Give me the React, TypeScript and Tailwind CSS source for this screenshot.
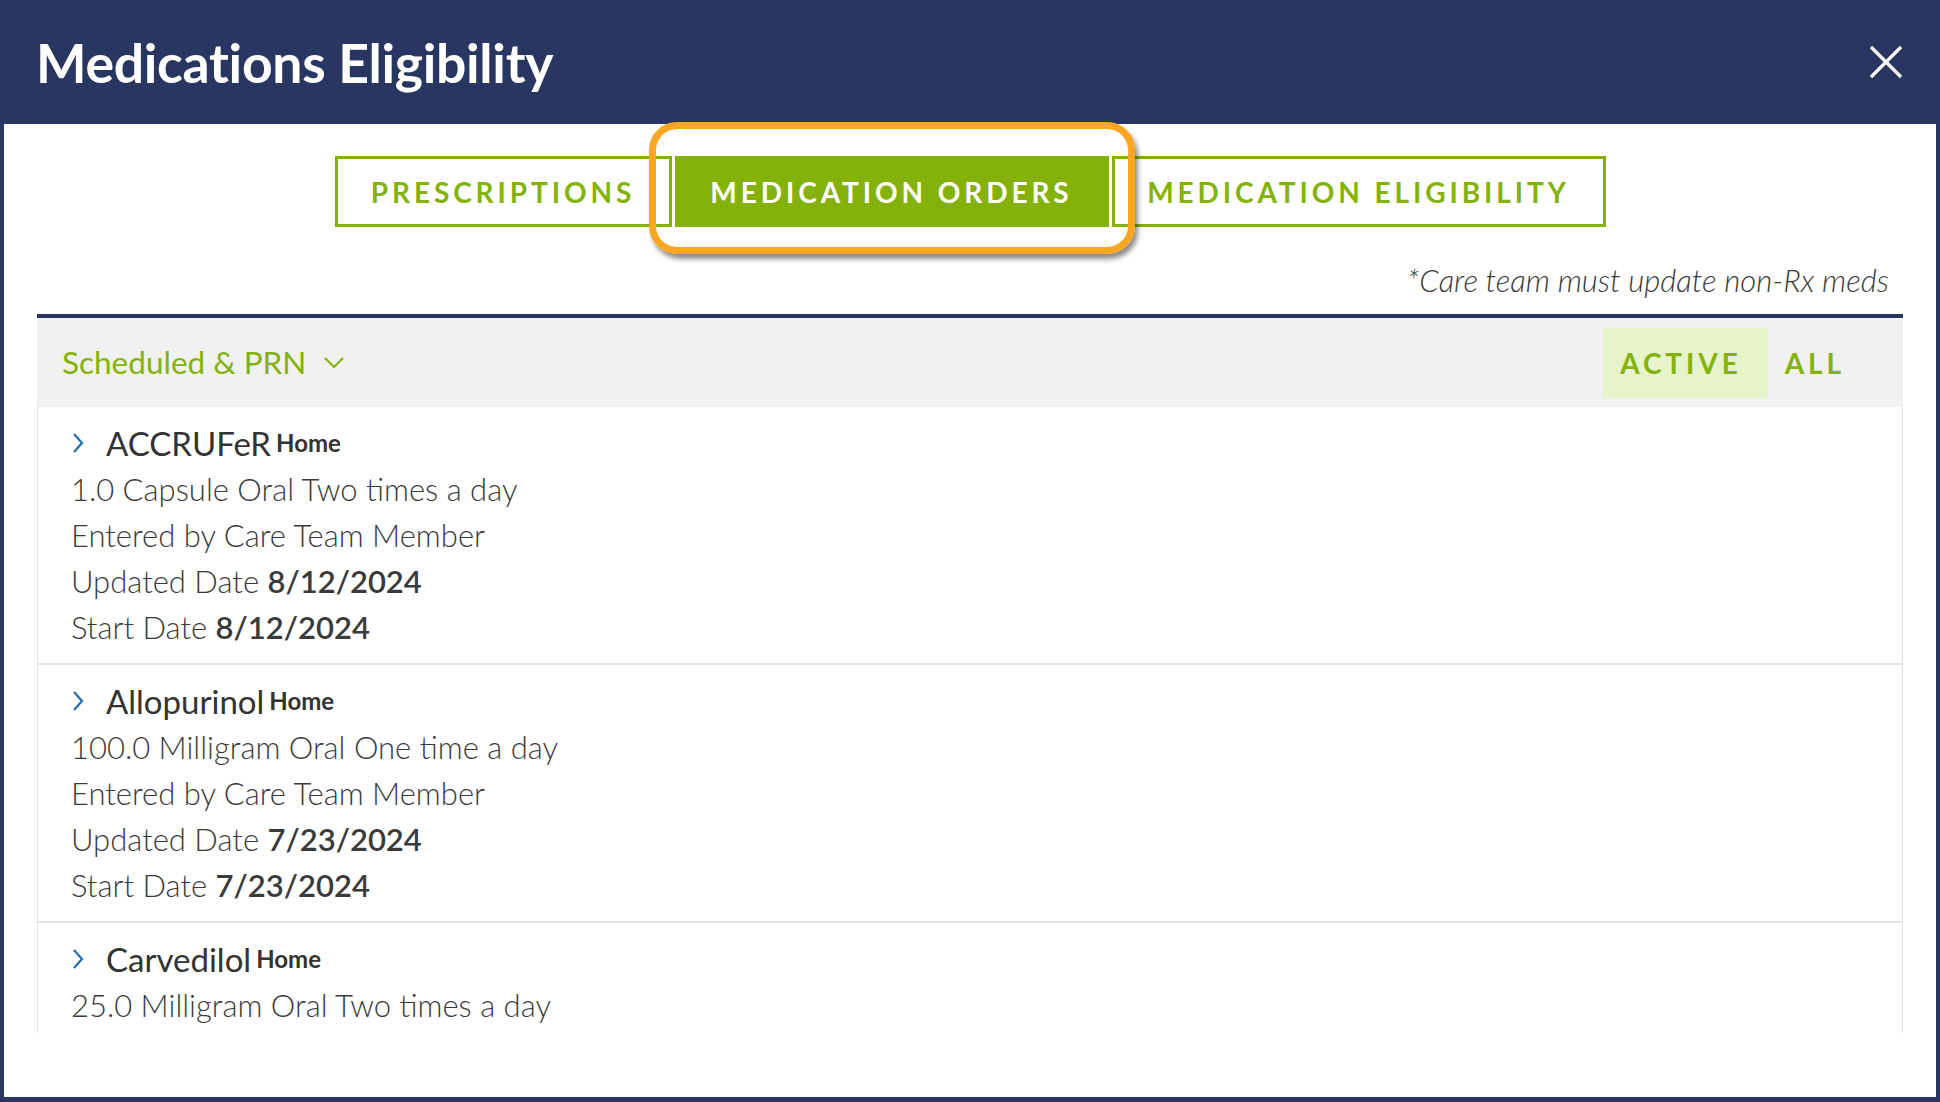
import React from "react";

const meds = [
  {
    name: "ACCRUFeR",
    dose: "1.0 Capsule Oral Two times a day",
    updated: "8/12/2024",
    start: "8/12/2024",
  },
  {
    name: "Allopurinol",
    dose: "100.0 Milligram Oral One time a day",
    updated: "7/23/2024",
    start: "7/23/2024",
  },
  {
    name: "Carvedilol",
    dose: "25.0 Milligram Oral Two times a day",
    updated: "7/23/2024",
    start: "7/23/2024",
  },
];

function ChevronRight() {
  return (
    <svg width="14" height="22" viewBox="0 0 14 22" fill="none">
      <path d="M3 2 L11 11 L3 20" stroke="#1f6db3" strokeWidth="2.2" />
    </svg>
  );
}

function MedRow({ med }: { med: (typeof meds)[number] }) {
  return (
    <div className="border-b-2 border-[#e3e3e3] pl-[33px] py-[13px] text-[31px] leading-[46px] font-light text-[#3a3a3a]">
      <div className="flex items-center">
        <span className="w-[35px] flex items-center">
          <ChevronRight />
        </span>
        <span className="font-normal text-[33px] text-[#333]">{med.name}</span>
        <span className="ml-[5px] font-bold text-[24px] text-[#333]">Home</span>
      </div>
      <div>{med.dose}</div>
      <div>Entered by Care Team Member</div>
      <div>
        Updated Date <span className="font-semibold">{med.updated}</span>
      </div>
      <div>
        Start Date <span className="font-semibold">{med.start}</span>
      </div>
    </div>
  );
}

export default function App() {
  return (
    <div className="w-[1940px] h-[1102px] bg-[#283661] flex flex-col font-['Lato',sans-serif]">
      <header className="h-[124px] flex items-center justify-between pl-[36px] pr-[37px] shrink-0">
        <h1 className="text-white font-bold text-[53.5px] tracking-[-0.3px]">Medications Eligibility</h1>
        <svg width="34" height="34" viewBox="0 0 34 34">
          <path d="M2 2 L32 32 M32 2 L2 32" stroke="white" strokeWidth="3.2" />
        </svg>
      </header>

      <div className="flex-1 bg-white mx-[4px] mb-[5px] px-[33px] flex flex-col">
        <div className="flex justify-center pt-[32px]">
          <div className="relative flex gap-[3px]">
            <button className="h-[71px] w-[337px] border-[3px] border-[#84b20b] text-[#84b20b] font-bold text-[28px] tracking-[0.14em]">
              PRESCRIPTIONS
            </button>
            <button className="h-[71px] w-[434px] bg-[#84b20b] text-white font-bold text-[28px] tracking-[0.14em]">
              MEDICATION ORDERS
            </button>
            <button className="h-[71px] w-[494px] border-[3px] border-[#84b20b] text-[#84b20b] font-bold text-[28px] tracking-[0.14em]">
              MEDICATION ELIGIBILITY
            </button>
            <div className="absolute left-[314px] top-[-34px] w-[486px] h-[132px] border-[7px] border-[#f9a723] rounded-[28px] shadow-[3px_5px_5px_rgba(0,0,0,0.45)] pointer-events-none" />
          </div>
        </div>

        <p className="mt-[33px] h-[40px] leading-[40px] text-right pr-[14px] italic font-light text-[31px] text-[#3a3a3a]">
          *Care team must update non-Rx meds
        </p>

        <div className="mt-[14px] border-t-4 border-[#283661] h-[719px] overflow-hidden flex flex-col">
          <div className="h-[89px] bg-[#f1f1f1] flex items-center justify-between pl-[25px] pr-[41px] shrink-0">
            <div className="flex items-center gap-[17px] text-[#84b20b] text-[31.5px]">
              <span>Scheduled &amp; PRN</span>
              <svg width="22" height="13" viewBox="0 0 22 13" fill="none">
                <path d="M2 2 L11 11 L20 2" stroke="#84b20b" strokeWidth="2" />
              </svg>
            </div>
            <div className="flex items-center h-full">
              <span className="h-[70px] pl-[17px] pr-[26px] flex items-center bg-[#e6f3cb] text-[#84b20b] font-bold text-[28px] tracking-[0.14em]">
                ACTIVE
              </span>
              <span className="h-[70px] px-[17px] flex items-center text-[#84b20b] font-bold text-[28px] tracking-[0.14em]">
                ALL
              </span>
            </div>
          </div>
          <div className="border-x border-[#e3e3e3] flex-1 overflow-hidden">
            {meds.map((m) => (
              <MedRow key={m.name} med={m} />
            ))}
          </div>
        </div>
      </div>
    </div>
  );
}
